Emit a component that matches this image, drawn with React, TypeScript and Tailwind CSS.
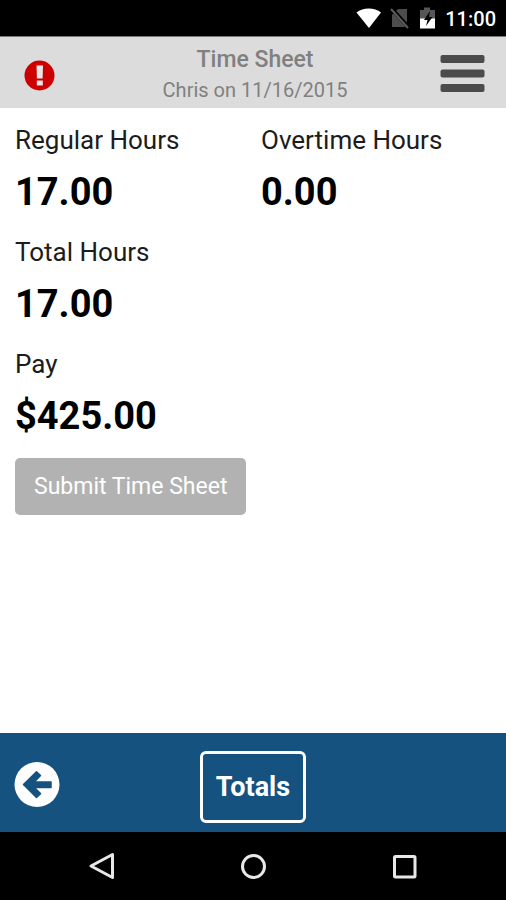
import React from 'react'

interface FigureProps {
  label: string;
  value: string;
}

const Figure = ({ label, value }: FigureProps) => {
  return (
    <div>
      <dt className="text-[26px] leading-8 text-[#1c1c1c]">{label}</dt>
      <dd className="mt-3 text-[38px] leading-[48px] font-bold">{value}</dd>
    </div>
  );
}

const StatusBar = () => {
  return (
    <div className="flex h-9 items-center justify-end bg-black pt-0.5 pr-2.5 text-white">
      <svg className="mr-2 h-6 w-7" viewBox="0 0 28 24" aria-hidden="true">
        <path d="M3.500 5.500C10 .2 21.500.2 28 5.500L16 21Z" fill="#fff" />
      </svg>
      <svg className="mr-2.5 h-6 w-5" viewBox="0 0 20 24" aria-hidden="true">
        <path d="M3 8 9 2h9v18H3Z" fill="#4d4d4d" />
        <path d="M2 1 20 21" stroke="#000" strokeWidth="4" />
        <path d="M2 2 19 21" stroke="#5c5c5c" strokeWidth="2" />
      </svg>
      <svg className="mr-2.5 h-6 w-4" viewBox="0 0 16 24" aria-hidden="true">
        <path d="M1 3h4V.5h6V3h5v9H1Z" fill="#565656" />
        <path d="M1 11.500h15v10H1Z" fill="#fff" />
        <path d="M11 4 5 13h3.500L7 19l6.500-9H10Z" fill="#000" />
      </svg>
      <span className="text-xl leading-6 font-medium">11:00</span>
    </div>
  );
}

const Header = () => {
  return (
    <header className="grid h-[72px] grid-cols-[auto_1fr_auto] items-center border-t border-[#777777] bg-[#dcdcdc] pt-0.5 pr-5 pl-6">
      <svg className="mr-4 mt-1 h-8 w-8" viewBox="0 0 32 32" role="img" aria-label="Not submitted">
        <circle cx="15.500" cy="15.500" r="15" fill="#cc0000" />
        <path d="M12.500 5.500h6.500l-.4 13h-5.700ZM12.800 20.500h6v5h-6Z" fill="#e6e6e6" />
      </svg>
      <div className="text-center text-[#808080]">
        <h1 className="text-[23px] leading-8 font-medium">Time Sheet</h1>
        <p className="text-xl leading-7">Chris on 11/16/2015</p>
      </div>
      <button type="button" aria-label="Menu">
        <svg className="h-10 w-12" viewBox="0 0 48 40" aria-hidden="true">
          <g fill="#4b4b4b">
            <rect x="2.500" y="1" width="44" height="8" rx="2" />
            <rect x="2.500" y="15.500" width="44" height="8" rx="2" />
            <rect x="2.500" y="30" width="44" height="8" rx="2" />
          </g>
        </svg>
      </button>
    </header>
  );
}

const Footer = () => {
  return (
    <footer className="grid h-[99px] grid-cols-3 items-center bg-[#15527f] px-3.5 pt-1">
      <button type="button" aria-label="Back" className="justify-self-start">
        <svg className="h-[46px] w-[46px]" viewBox="0 0 46 46" aria-hidden="true">
          <circle cx="23" cy="22.500" r="22.500" fill="#fff" />
          <path
            d="M9.500 22.500 22.500 9.800 26.500 13.600 20.300 20H37v5.500H20.300L26.500 31.600 22.500 35.400Z"
            fill="#15527f"
            stroke="#15527f"
            strokeWidth="1.500"
            strokeLinejoin="round"
          />
        </svg>
      </button>
      <button type="button" className="mt-1 h-[72px] w-[106px] justify-self-center rounded-md border-3 border-white text-[27px] leading-8 font-bold text-white">
        Totals
      </button>
    </footer>
  );
}

const NavBar = () => {
  return (
    <nav className="flex h-[68px] items-center justify-around bg-black px-[26px]">
      <button type="button" aria-label="System back">
        <svg className="h-8 w-8" viewBox="0 0 32 32" fill="none" stroke="#e8e8e8" strokeWidth="3" strokeLinejoin="round">
          <path d="M26.500 4.500v23L5 16Z" />
        </svg>
      </button>
      <button type="button" aria-label="Home">
        <svg className="h-8 w-8" viewBox="0 0 32 32" fill="none" stroke="#e8e8e8" strokeWidth="3">
          <circle cx="16.500" cy="16.500" r="11" />
        </svg>
      </button>
      <button type="button" aria-label="Recent apps">
        <svg className="h-8 w-8" viewBox="0 0 32 32" fill="none" stroke="#e8e8e8" strokeWidth="3">
          <rect x="6.500" y="6.500" width="20.500" height="20.500" rx="1" />
        </svg>
      </button>
    </nav>
  );
}

const App = () => {
  return (
    <div className="flex min-h-screen flex-col bg-white font-['Roboto',sans-serif] text-black">
      <StatusBar />
      <Header />
      <main className="flex-1 px-[15px] py-4">
        <dl className="grid grid-cols-2 gap-x-4 gap-y-5">
          <Figure label="Regular Hours" value="17.00" />
          <Figure label="Overtime Hours" value="0.00" />
          <div className="col-span-2">
            <Figure label="Total Hours" value="17.00" />
          </div>
          <div className="col-span-2">
            <Figure label="Pay" value="$425.00" />
          </div>
        </dl>
        <button type="button" className="mt-[18px] h-[57px] rounded-[5px] bg-[#b2b2b2] px-[19px] text-[23px] leading-8 text-white">
          Submit Time Sheet
        </button>
      </main>
      <Footer />
      <NavBar />
    </div>
  );
}

export default App
